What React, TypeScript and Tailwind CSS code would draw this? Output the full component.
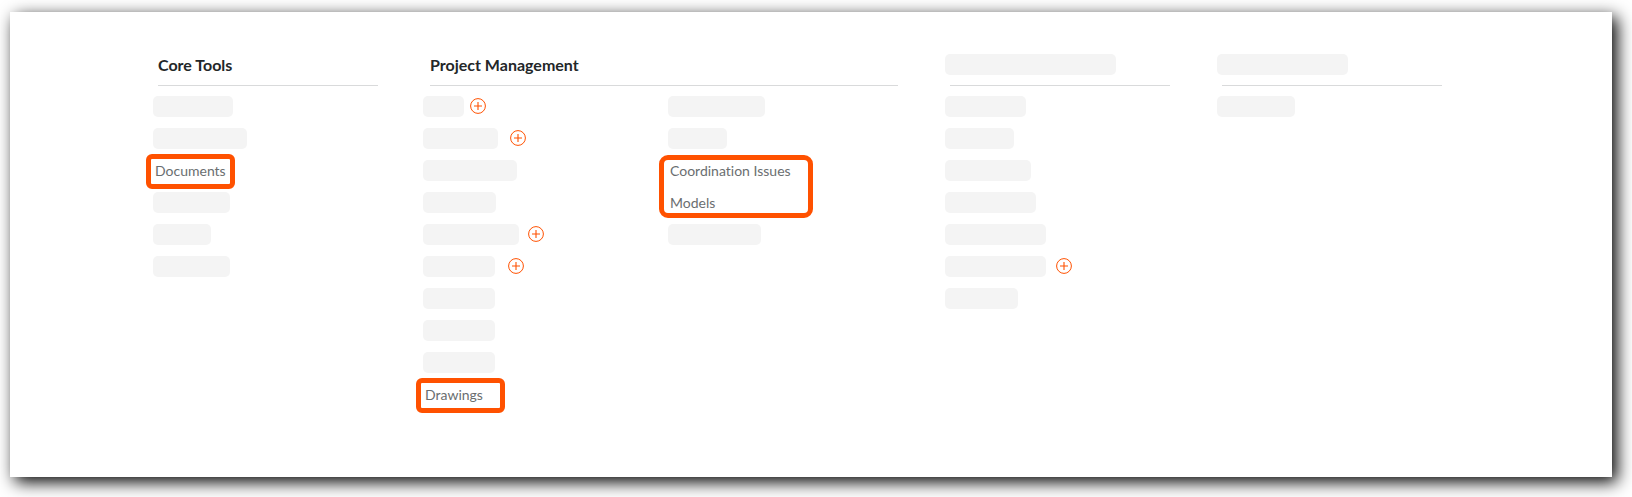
import clsx from "clsx";

type Item = {
  label?: string;
  width?: string;
  add?: string;
  highlight?: boolean;
};

const coreTools: Item[] = [
  { width: "w-20" },
  { width: "w-[94px]" },
  { label: "Documents", highlight: true },
  { width: "w-[77px]" },
  { width: "w-[58px]" },
  { width: "w-[77px]" },
];

const projectTools: Item[] = [
  { width: "w-[41px]", add: "ml-1.5" },
  { width: "w-[75px]", add: "ml-3" },
  { width: "w-[94px]" },
  { width: "w-[73px]" },
  { width: "w-24", add: "ml-[9px]" },
  { width: "w-[72px]", add: "ml-[13px]" },
  { width: "w-[72px]" },
  { width: "w-[72px]" },
  { width: "w-[72px]" },
  { label: "Drawings", highlight: true },
];

const financialTools: Item[] = [
  { width: "w-[81px]" },
  { width: "w-[69px]" },
  { width: "w-[86px]" },
  { width: "w-[91px]" },
  { width: "w-[101px]" },
  { width: "w-[101px]", add: "ml-2.5" },
  { width: "w-[73px]" },
];

function Bar({ width }: { width?: string }) {
  return <span className={clsx("block h-[21px] rounded-[5px] bg-[#f4f4f4]", width)} />;
}

function AddButton({ className }: { className?: string }) {
  return (
    <button type="button" aria-label="Create" className={clsx("mt-0.5 h-4 w-4 text-[#ff5100]", className)}>
      <svg viewBox="0 0 16 16" className="block h-4 w-4" fill="none" stroke="currentColor">
        <circle cx="8" cy="8" r="7.4" strokeWidth="1" />
        <path d="M8 4v8M4 8h8" strokeWidth="1.1" />
      </svg>
    </button>
  );
}

function ToolLink({ children }: { children: string }) {
  return (
    <a
      href="#"
      className="block pl-0.5 text-sm leading-[21px] whitespace-nowrap text-[#6a6e70] [font-variant-ligatures:none]"
    >
      {children}
    </a>
  );
}

function ToolRow({ item }: { item: Item }) {
  if (item.label) {
    return (
      <li className="relative h-[21px]">
        <ToolLink>{item.label}</ToolLink>
        {item.highlight && (
          <span className="pointer-events-none absolute -top-1.5 -left-[7px] h-[35px] w-[89px] rounded-md border-5 border-[#ff5100]" />
        )}
      </li>
    );
  }

  return (
    <li className="flex h-[21px] items-start">
      <Bar width={item.width} />
      {item.add && <AddButton className={item.add} />}
    </li>
  );
}

function ToolList({ items }: { items: Item[] }) {
  return (
    <ul className="flex flex-col gap-[11px]">
      {items.map((item, i) => (
        <ToolRow key={i} item={item} />
      ))}
    </ul>
  );
}

function Heading({ title, width }: { title?: string; width?: string }) {
  return (
    <div className="mb-2.5 flex h-[34px] items-start border-b border-[#d9dadb]">
      {title ? (
        <h2 className="text-base leading-[26px] font-bold whitespace-nowrap text-[#232729]">{title}</h2>
      ) : (
        <div className="-ml-[5px] pt-0.5">
          <Bar width={width} />
        </div>
      )}
    </div>
  );
}

export default function App() {
  return (
    <div className="overflow-hidden bg-white pt-3 pr-5 pb-5 pl-2.5 font-['Lato',sans-serif]">
      <main className="grid min-h-[465px] grid-cols-[220fr_468fr_220fr_220fr] content-start gap-[52px] bg-white pt-10 pr-[170px] pb-16 pl-[148px] shadow-[5px_5px_16px_#000]">
        <section>
          <Heading title="Core Tools" />
          <div className="-ml-[5px]">
            <ToolList items={coreTools} />
          </div>
        </section>

        <section>
          <Heading title="Project Management" />
          <div className="-ml-[7px] grid grid-cols-2 gap-[15px]">
            <ToolList items={projectTools} />
            <ul className="flex flex-col gap-[11px]">
              <ToolRow item={{ width: "w-[97px]" }} />
              <ToolRow item={{ width: "w-[59px]" }} />
              <li className="relative">
                <ul className="flex flex-col gap-[11px]">
                  <ToolRow item={{ label: "Coordination Issues" }} />
                  <ToolRow item={{ label: "Models" }} />
                </ul>
                <span className="pointer-events-none absolute -top-[5px] -bottom-[5px] -left-[9px] w-[154px] rounded-[9px] border-5 border-[#ff5100]" />
              </li>
              <ToolRow item={{ width: "w-[93px]" }} />
            </ul>
          </div>
        </section>

        <section>
          <Heading width="w-[171px]" />
          <div className="-ml-[5px]">
            <ToolList items={financialTools} />
          </div>
        </section>

        <section>
          <Heading width="w-[131px]" />
          <div className="-ml-[5px]">
            <ToolList items={[{ width: "w-[78px]" }]} />
          </div>
        </section>
      </main>
    </div>
  );
}
